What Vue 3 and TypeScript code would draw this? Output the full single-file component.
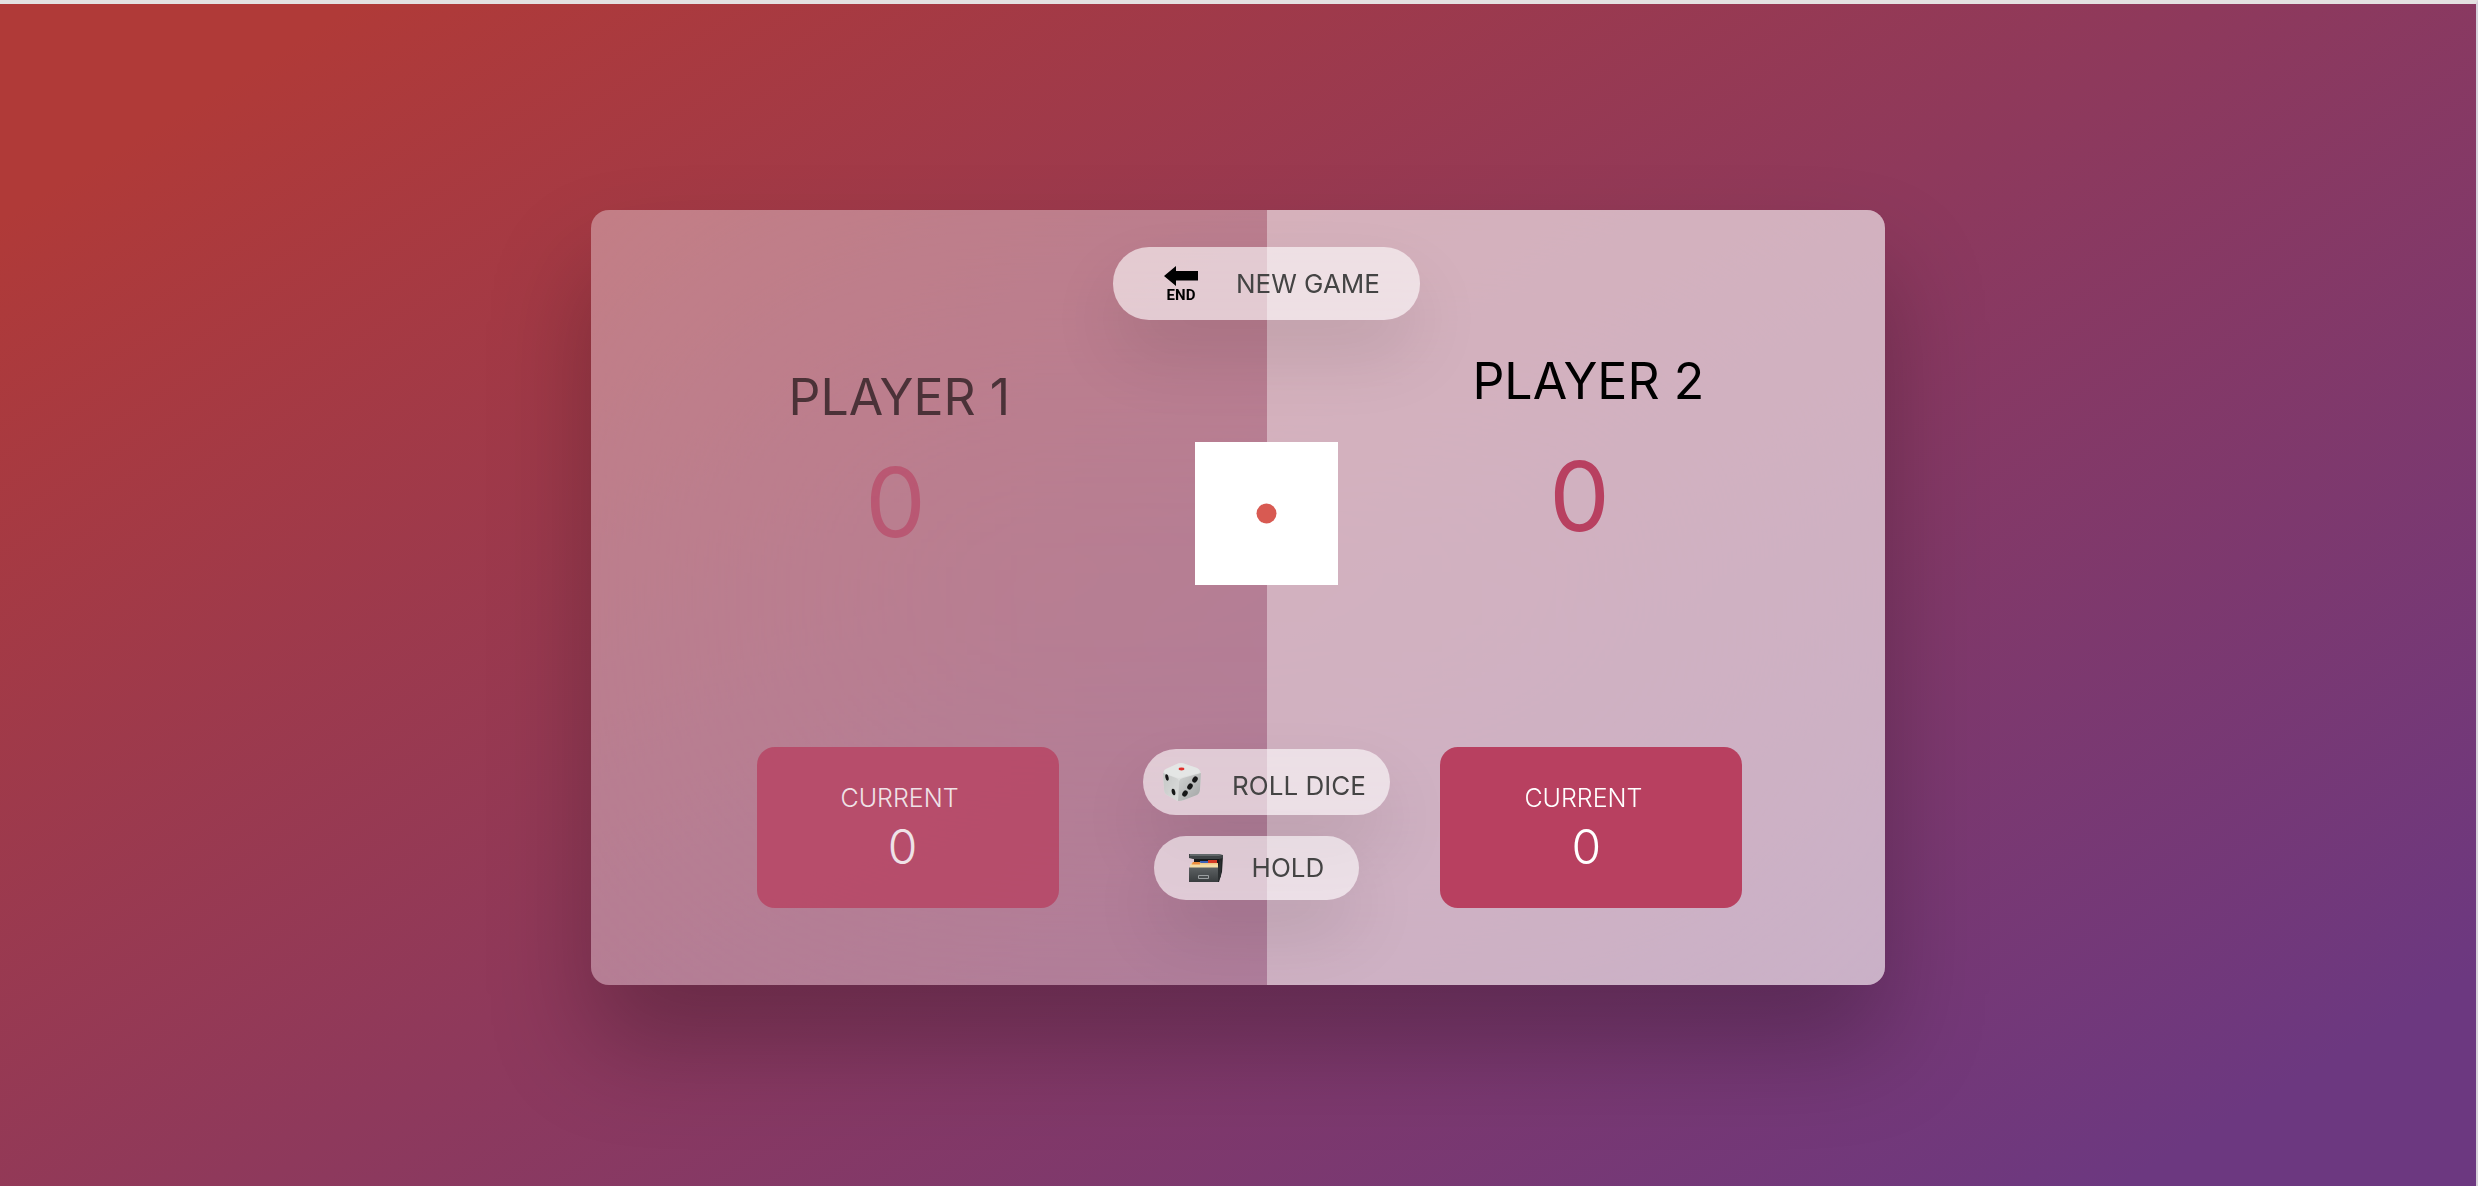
<script setup lang="ts">
import { ref } from 'vue'

interface Player {
  name: string
  score: number
  current: number
}

const players = ref<Player[]>([
  { name: 'Player 1', score: 0, current: 0 },
  { name: 'Player 2', score: 0, current: 0 },
])
const active = ref(1)

function newGame(): void {
  players.value.forEach((p) => {
    p.score = 0
    p.current = 0
  })
}

function hold(): void {
  const p = players.value[active.value]
  p.score += p.current
  p.current = 0
  active.value = 1 - active.value
}

function rollDice(): void {
  players.value[active.value].current = 0
  active.value = 1 - active.value
}
</script>

<template>
  <div class="page">
    <main class="board">
      <section
        v-for="(player, i) in players"
        :key="player.name"
        class="player"
        :class="[`player-${i + 1}`, { active: i === active }]"
      >
        <div class="column">
          <h2 class="name">{{ player.name }}</h2>
          <p class="score">{{ player.score }}</p>
          <div class="current">
            <p class="label">Current</p>
            <p class="points">{{ player.current }}</p>
          </div>
        </div>
      </section>

      <div class="controls">
        <button type="button" class="btn btn-new" @click="newGame">
          <svg class="icon" width="34" height="40" viewBox="0 -2 34 40" aria-hidden="true">
            <path d="M0 10 12 0V5H34V14.500H12V20Z" fill="#000" />
            <text x="17" y="34" text-anchor="middle" class="end-text">END</text>
          </svg>
          <span>New game</span>
        </button>

        <svg class="dice" viewBox="0 0 143 143" role="img" aria-label="Dice showing one">
          <rect width="143" height="143" fill="#fff" />
          <circle cx="71.500" cy="71.500" r="10" fill="#d85a52" />
        </svg>

        <button type="button" class="btn btn-roll" @click="rollDice">
          <svg class="icon" width="38" height="38" viewBox="0 0 38 38" aria-hidden="true">
            <defs>
              <linearGradient id="dieLeft" x1="0" y1="0" x2="1" y2="1">
                <stop offset="0" stop-color="#c4c6c5" />
                <stop offset="1" stop-color="#dcdedd" />
              </linearGradient>
              <linearGradient id="dieRight" x1="0" y1="0" x2="1" y2="1">
                <stop offset="0" stop-color="#d2d4d3" />
                <stop offset="1" stop-color="#a2a4a4" />
              </linearGradient>
            </defs>
            <path d="M0 12Q0 8 3 6L14 1Q18 -1 22 1L34 5Q38 7 38 11L37 26Q37 30 34 32L21 37Q17 39 13 37L4 32Q1 30 1 26Z" fill="#dddfde" />
            <path d="M0 10 13 15Q16 16 16 19L15 38Q14 38 13 37L4 32Q1 30 1 26Z" fill="url(#dieLeft)" />
            <path d="M38 10 20 15Q16 16 16 19L15 38Q18 38 21 37L34 32Q37 30 37 26Z" fill="url(#dieRight)" />
            <path d="M1 8Q1 7 3 6L14 1Q18 -1 22 1L34 5Q38 7 36 10L20 14Q16 16 12 14L3 11Q1 10 1 8Z" fill="#e4e6e5" />
            <ellipse cx="18.500" cy="6" rx="3" ry="1.400" fill="#e0302c" />
            <g fill="#161717">
              <ellipse cx="4" cy="14.500" rx="1.600" ry="3.200" transform="rotate(-12 4 14.500)" />
              <ellipse cx="10.500" cy="29" rx="1.800" ry="3.200" transform="rotate(-12 10.500 29)" />
              <ellipse cx="32" cy="16.500" rx="2.500" ry="3.300" transform="rotate(32 32 16.500)" />
              <ellipse cx="27" cy="23.500" rx="2.500" ry="3.300" transform="rotate(32 27 23.500)" />
              <ellipse cx="22" cy="30.500" rx="2.500" ry="3.300" transform="rotate(32 22 30.500)" />
            </g>
          </svg>
          <span>Roll dice</span>
        </button>

        <button type="button" class="btn btn-hold" @click="hold">
          <svg class="icon" width="36" height="28" viewBox="0 0 36 28" aria-hidden="true">
            <defs>
              <linearGradient id="boxFront" x1="0" y1="0" x2="0" y2="1">
                <stop offset="0" stop-color="#5d6163" />
                <stop offset="1" stop-color="#393d3f" />
              </linearGradient>
            </defs>
            <path d="M28 3 34 2 33 18 30 28H28Z" fill="#222526" />
            <path d="M5 4H30V14H5Z" fill="#17191a" />
            <path d="M0 0H29L34 1V4L30 5H4L0 4Z" fill="#3f4446" />
            <path d="M1 0H29L33 1 30 2H1Z" fill="#62686a" />
            <path d="M19 6H28V9H19Z" fill="#d43a25" />
            <path d="M11 7H19V10H11Z" fill="#3c62b8" />
            <path d="M2 10 4 8H10L12 9H29V14H2Z" fill="#eec988" />
            <path d="M3 10 4 8H10L11 9V11H3Z" fill="#ee8d3c" />
            <path d="M1 10.500H29V14H1Z" fill="#f5dda6" />
            <path d="M0 13.500H29V28H0Z" fill="url(#boxFront)" />
            <path d="M29 13 32 5V22L29 28Z" fill="#2b2f31" />
            <path d="M9.500 21.500V24.500H19.500V21.500Z" fill="#4a4e50" stroke="#9b9fa1" stroke-width="1" />
          </svg>
          <span>Hold</span>
        </button>
      </div>
    </main>
  </div>
</template>

<style>
body {
  margin: 0;
}
</style>

<style scoped>
.page {
  box-sizing: border-box;
  min-height: 100vh;
  display: flex;
  align-items: center;
  justify-content: center;
  padding-top: 4px;
  border-top: 4px solid #e4e1e1;
  border-right: 2px solid #d6d0da;
  background: linear-gradient(149deg, #b03a38 8%, #6c3880 92%);
  font-family: Inter, 'Liberation Sans', sans-serif;
  font-weight: 300;
}

.board {
  width: 52.3%;
  display: grid;
  grid-template-columns: 23fr 0 21fr;
  border-radius: 18px;
  background: rgba(255, 255, 255, 0.35);
  backdrop-filter: blur(200px);
  box-shadow: 0 60px 100px rgba(0, 0, 0, 0.25);
}

.player {
  grid-row: 1;
  display: flex;
  padding: 161px 0 77px 166px;
}

.player-1 {
  grid-column: 1;
  border-radius: 18px 0 0 18px;
}

.player-2 {
  grid-column: 3;
  padding-left: 173px;
  border-radius: 0 18px 18px 0;
}

.player.active {
  padding-top: 145px;
  background: rgba(255, 255, 255, 0.4);
}

.column {
  width: 302px;
  display: flex;
  flex-direction: column;
}

.name,
.score,
.label,
.points {
  margin: 0;
  line-height: 1;
}

.name {
  padding-left: 32px;
  font-size: 50px;
  font-weight: 400;
  line-height: 52px;
  text-transform: uppercase;
  white-space: nowrap;
  color: #000;
  opacity: 0.6;
}

.score {
  margin-top: 31px;
  padding-right: 24px;
  font-size: 96px;
  font-weight: 400;
  text-align: center;
  color: #b84060;
  opacity: 0.6;
}

.active .name,
.active .score,
.active .current {
  opacity: 1;
}

.active .score {
  margin-top: 41px;
}

.current {
  margin-top: auto;
  padding: 39px 16px 37px 0;
  border-radius: 18px;
  background: #b84060;
  color: #fff;
  text-align: center;
  opacity: 0.78;
}

.label {
  font-size: 25px;
  text-transform: uppercase;
}

.points {
  margin-top: 12px;
  padding-left: 6px;
  font-size: 48px;
}

.controls {
  grid-row: 1;
  grid-column: 2;
  justify-self: center;
  z-index: 1;
  display: flex;
  flex-direction: column;
  align-items: center;
  padding: 37px 2px 85px 0;
}

.btn {
  box-sizing: border-box;
  display: flex;
  align-items: center;
  border: 0;
  border-radius: 36px;
  background: rgba(255, 255, 255, 0.6);
  box-shadow: 0 35px 70px rgba(0, 0, 0, 0.1);
  color: #444;
  font-family: inherit;
  font-size: 26px;
  font-weight: 400;
  line-height: 32px;
  text-transform: uppercase;
  white-space: nowrap;
  cursor: pointer;
}

.icon {
  flex: none;
}

.end-text {
  font-family: Roboto, sans-serif;
  font-size: 15px;
  font-weight: 700;
}

.btn-new {
  height: 73px;
  gap: 38px;
  padding: 2px 40px 0 51px;
}

.dice {
  width: 143px;
  margin: 122px 0 164px;
}

.btn-roll {
  height: 66px;
  gap: 31px;
  padding: 0 24px 0 20px;
}

.btn-roll span {
  padding-top: 8px;
}

.btn-hold {
  height: 64px;
  margin: 21px 20px 0 0;
  gap: 27px;
  padding: 0 35px;
}
</style>
